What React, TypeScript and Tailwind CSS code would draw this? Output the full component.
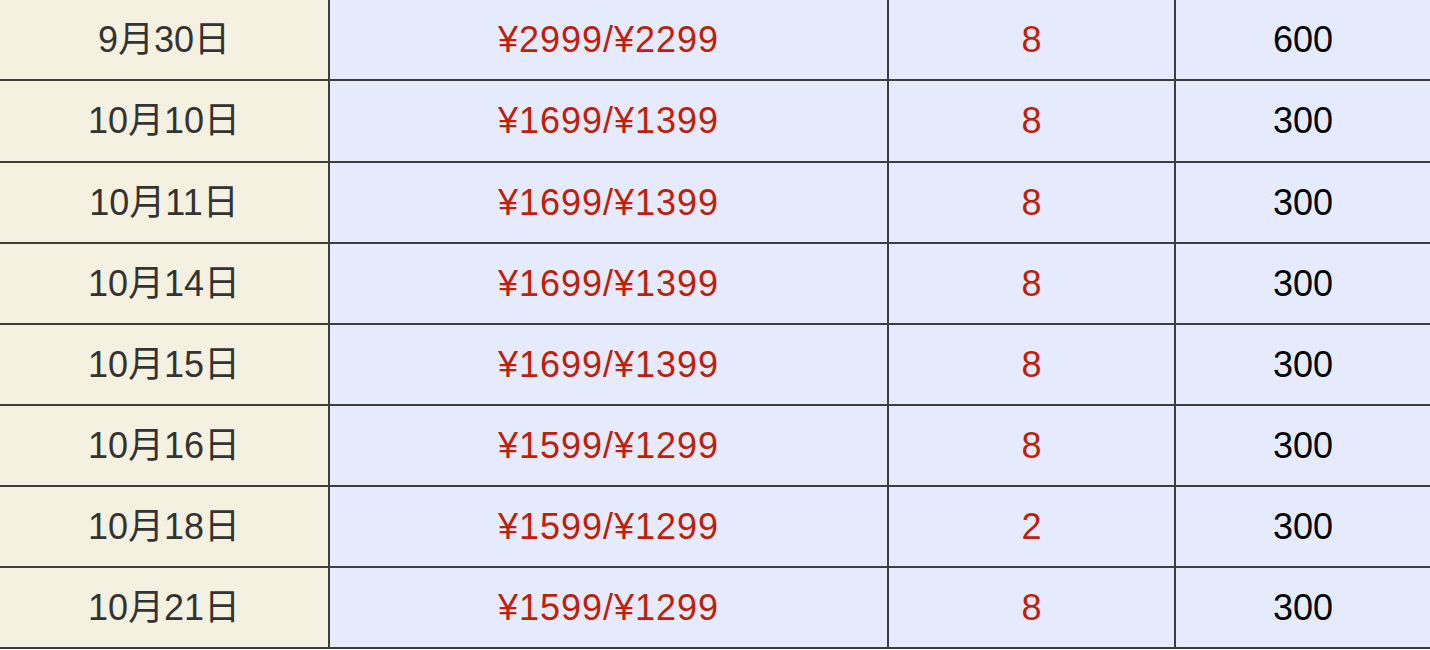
const rows = [
  { date: '9月30日', price: '¥2999/¥2299', count: '8', cap: '600' },
  { date: '10月10日', price: '¥1699/¥1399', count: '8', cap: '300' },
  { date: '10月11日', price: '¥1699/¥1399', count: '8', cap: '300' },
  { date: '10月14日', price: '¥1699/¥1399', count: '8', cap: '300' },
  { date: '10月15日', price: '¥1699/¥1399', count: '8', cap: '300' },
  { date: '10月16日', price: '¥1599/¥1299', count: '8', cap: '300' },
  { date: '10月18日', price: '¥1599/¥1299', count: '2', cap: '300' },
  { date: '10月21日', price: '¥1599/¥1299', count: '8', cap: '300' },
]

export default function App() {
  return (
    <div
      className="w-[1430px] h-[650px] overflow-hidden bg-white text-[36px]"
      style={{ fontFamily: '"Liberation Sans", Arial, "Noto Sans CJK SC", sans-serif' }}
    >
      {rows.map((r, i) => (
        <div
          key={i}
          className={`grid grid-cols-[330px_559px_287px_1fr] border-b-2 border-[#3e3e3e] ${
            i === 1 ? 'h-[82px]' : 'h-[81px]'
          }`}
        >
          <div className="flex items-center justify-center bg-[#f4f1e1] text-[#333333] border-r-2 border-[#3e3e3e]">
            {r.date}
          </div>
          <div className="flex items-center justify-center bg-[#e5ebfd] text-[#c0200b] tracking-[1px] border-r-2 border-[#3e3e3e]">
            {r.price}
          </div>
          <div className="flex items-center justify-center bg-[#e5ebfd] text-[#c0200b] border-r-2 border-[#3e3e3e]">
            {r.count}
          </div>
          <div className="flex items-center justify-center bg-[#e5ebfd] text-black">{r.cap}</div>
        </div>
      ))}
    </div>
  )
}
